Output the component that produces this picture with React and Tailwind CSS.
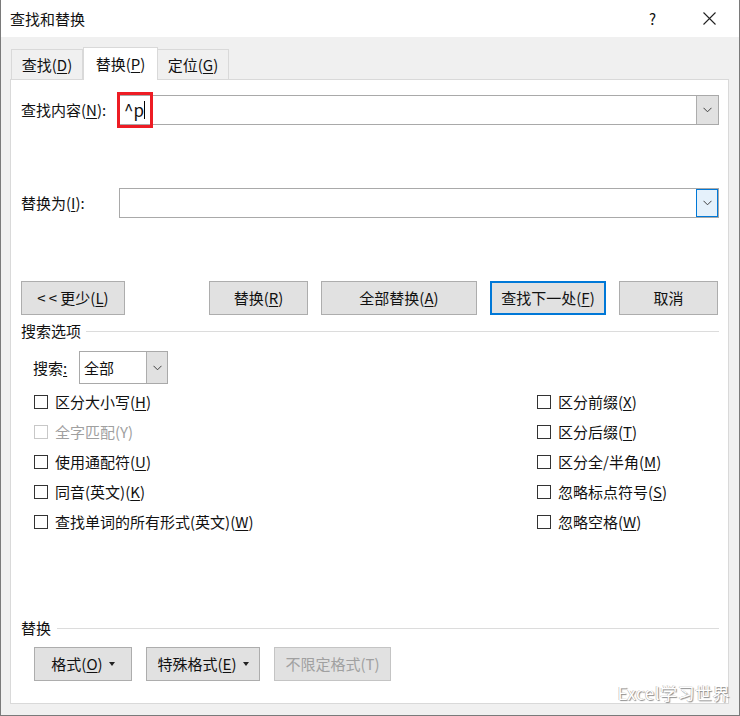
import React from "react";

const U = ({ children }) => <span className="underline underline-offset-2 decoration-1">{children}</span>;

function Btn({ className = "", children, primary, disabled }) {
  return (
    <div
      className={
        "h-[34px] flex items-center justify-center bg-[#e1e1e1] " +
        (primary ? "border-2 border-[#0078d7] " : disabled ? "border border-[#c4c4c4] text-[#a0a0a0] " : "border border-[#adadad] ") +
        className
      }
    >
      {children}
    </div>
  );
}

function Chevron() {
  return (
    <svg width="9" height="6" viewBox="0 0 9 6">
      <path d="M0.5 0.8 L4.5 4.8 L8.5 0.8" fill="none" stroke="#404040" strokeWidth="1" />
    </svg>
  );
}

function Check({ label, disabled }) {
  return (
    <div className="h-[30px] flex items-center">
      <div className={"w-[14px] h-[14px] border bg-white " + (disabled ? "border-[#c8c8c8]" : "border-[#333333]")} />
      <span className={"ml-[7px] " + (disabled ? "text-[#a0a0a0]" : "text-[#111]")}>{label}</span>
    </div>
  );
}

function Caret() {
  return <span className="ml-[6px] inline-block w-0 h-0 border-l-[3.5px] border-r-[3.5px] border-t-[4px] border-l-transparent border-r-transparent border-t-[#222]" />;
}

export default function App() {
  return (
    <div className="relative w-[740px] h-[716px] flex flex-col bg-[#f0f0f0] border-x border-b border-[#7a7a7a] text-[15px] text-[#111] font-['Noto_Sans_CJK_SC',sans-serif] leading-[20px] overflow-hidden">
      {/* title bar */}
      <div className="h-[37px] bg-white flex items-center pl-[9px] shrink-0">
        <span>查找和替换</span>
        <span className="ml-auto mr-[47px] text-[15px]">?</span>
        <svg width="13" height="13" viewBox="0 0 13 13" className="mr-[23px]">
          <path d="M0.5 0.5 L12.5 12.5 M12.5 0.5 L0.5 12.5" stroke="#222" strokeWidth="1.1" />
        </svg>
      </div>

      {/* body */}
      <div className="flex-1 flex flex-col pt-[10px] pl-[9px] pr-[10px] pb-[11px]">
        {/* tabs */}
        <div className="flex items-end h-[33px] relative z-10 -mb-px">
          <div className="ml-[1px] w-[72px] h-[31px] border border-b-0 border-[#d9d9d9] flex items-center justify-center">
            <span>查找(<U>D</U>)</span>
          </div>
          <div className="w-[75px] h-[33px] bg-white border border-b-0 border-[#d9d9d9] flex items-center justify-center">
            <span>替换(<U>P</U>)</span>
          </div>
          <div className="w-[71px] h-[31px] border border-b-0 border-l-0 border-[#d9d9d9] flex items-center justify-center">
            <span>定位(<U>G</U>)</span>
          </div>
        </div>

        {/* panel */}
        <div className="flex-1 bg-white border border-[#d9d9d9] pl-[10px] pr-[9px] flex flex-col">
          {/* find row */}
          <div className="mt-[15px] h-[30px] flex items-center">
            <span className="w-[96px]">查找内容(<U>N</U>):</span>
            <div className="relative flex-1 h-[30px] border border-[#a9a9a9] flex items-center">
              <span className="ml-[6px] text-[17px] leading-[20px]">^p</span>
              <span className="w-px h-[18px] bg-black" />
              <div className="ml-auto w-[22px] h-full bg-[#e1e1e1] border-l border-[#adadad] flex items-center justify-center">
                <Chevron />
              </div>
              <div className="absolute left-[-1px] top-[-4px] w-[36px] h-[36px] border-[3px] border-[#ed1c24]" />
            </div>
          </div>

          {/* replace row */}
          <div className="mt-[63px] h-[30px] flex items-center">
            <span className="w-[98px]">替换为(<U>I</U>):</span>
            <div className="flex-1 h-[30px] border border-[#a9a9a9] flex items-center">
              <div className="ml-auto w-[22px] h-full bg-[#e5f1fb] border border-[#0078d7] flex items-center justify-center">
                <Chevron />
              </div>
            </div>
          </div>

          {/* buttons */}
          <div className="mt-[63px] flex items-center">
            <Btn className="w-[104px]">&lt;&thinsp;&lt; 更少(<U>L</U>)</Btn>
            <Btn className="w-[99px] ml-[84px]">替换(<U>R</U>)</Btn>
            <Btn className="w-[156px] ml-[13px]">全部替换(<U>A</U>)</Btn>
            <Btn primary className="w-[116px] ml-[13px]">查找下一处(<U>F</U>)</Btn>
            <Btn className="w-[99px] ml-[13px]">取消</Btn>
          </div>

          {/* search options header */}
          <div className="mt-[6px] h-[20px] flex items-center">
            <span>搜索选项</span>
            <div className="flex-1 h-px bg-[#dcdcdc] ml-[5px]" />
          </div>

          {/* search select */}
          <div className="mt-[10px] h-[33px] flex items-center pl-[12px]">
            <span className="w-[46px]">搜索<span className="underline underline-offset-2">:</span></span>
            <div className="w-[89px] h-[33px] border border-[#a9a9a9] flex items-center">
              <span className="ml-[4px]">全部</span>
              <div className="ml-auto w-[21px] h-full bg-[#e1e1e1] border-l border-[#adadad] flex items-center justify-center">
                <Chevron />
              </div>
            </div>
          </div>

          {/* checkboxes */}
          <div className="mt-[3px] flex pl-[13px]">
            <div className="flex flex-col w-[503px]">
              <Check label={<>区分大小写(<U>H</U>)</>} />
              <Check disabled label={<>全字匹配(Y)</>} />
              <Check label={<>使用通配符(<U>U</U>)</>} />
              <Check label={<>同音(英文)(<U>K</U>)</>} />
              <Check label={<>查找单词的所有形式(英文)(<U>W</U>)</>} />
            </div>
            <div className="flex flex-col">
              <Check label={<>区分前缀(<U>X</U>)</>} />
              <Check label={<>区分后缀(<U>T</U>)</>} />
              <Check label={<>区分全/半角(<U>M</U>)</>} />
              <Check label={<>忽略标点符号(<U>S</U>)</>} />
              <Check label={<>忽略空格(<U>W</U>)</>} />
            </div>
          </div>

          {/* replace header */}
          <div className="mt-[81px] h-[20px] flex items-center">
            <span>替换</span>
            <div className="flex-1 h-px bg-[#dcdcdc] ml-[6px]" />
          </div>

          <div className="mt-[9px] flex items-center pl-[13px]">
            <Btn className="w-[98px] h-[33px]">格式(<U>O</U>)<Caret /></Btn>
            <Btn className="w-[114px] ml-[14px]">特殊格式(<U>E</U>)<Caret /></Btn>
            <Btn disabled className="w-[117px] ml-[14px]">不限定格式(T)</Btn>
          </div>
        </div>
      </div>

      {/* watermark */}
      <div className="absolute right-[9px] bottom-[12px] text-[17px] leading-[20px] text-white tracking-[0.5px] font-['Noto_Sans_CJK_SC',sans-serif] [text-shadow:1px_1px_1px_#8a8a8a,-0.5px_-0.5px_0_#b0b0b0]">
        Excel学习世界
      </div>
    </div>
  );
}
